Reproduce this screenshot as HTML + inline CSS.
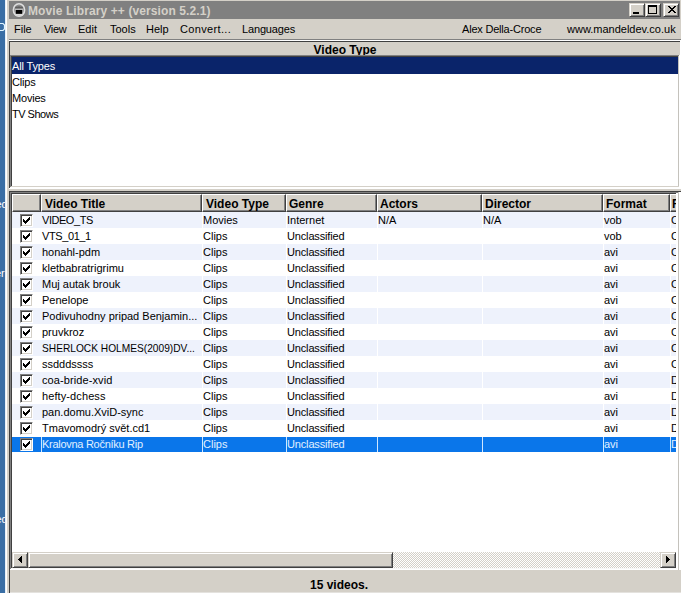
<!DOCTYPE html>
<html><head><meta charset="utf-8"><style>
*{margin:0;padding:0;box-sizing:border-box}
html,body{width:681px;height:593px;overflow:hidden;background:#3a6ea5}
body{position:relative;font-family:"Liberation Sans",sans-serif;font-size:11px;color:#000}
.a{position:absolute}
.t{position:absolute;white-space:nowrap;line-height:16px;height:16px}
.b{font-weight:bold;font-size:12px}
</style></head><body>

<div class="t" style="left:-4.5px;top:196px;color:#fff">ed</div>
<div class="t" style="left:-5px;top:265px;color:#fff">er</div>
<div class="t" style="left:-4.5px;top:511px;color:#fff">ed</div>
<svg class="a" style="left:0;top:0" width="8" height="40"><path d="M0 23.5H3L4.5 25V29L3 30.5H0" fill="none" stroke="#dff4ff" stroke-width="1.2"/></svg>
<div class="a" style="left:5px;top:0px;width:676px;height:593px;background:#d4d0c8;"></div>
<div class="a" style="left:5px;top:0px;width:1px;height:593px;background:#e6eef6;"></div>
<div class="a" style="left:6px;top:0px;width:1px;height:593px;background:#fff;"></div>
<div class="a" style="left:9px;top:1px;width:671px;height:18px;background:#808080;"></div>
<svg class="a" style="left:11px;top:2px" width="16" height="16" viewBox="0 0 16 16">
<ellipse cx="8" cy="8" rx="5.6" ry="6.3" fill="#8a8a8a" stroke="#dedede" stroke-width="1.6"/>
<path d="M4 5.5 Q5 3.8 6.5 4.8 Q8 3.5 9.5 4.8 Q11 3.8 12 5.5 L12 7 L4 7 Z" fill="#5e5e5e"/>
<rect x="4" y="6.6" width="8" height="1.2" fill="#c8c8c8"/>
<rect x="5" y="8" width="6" height="3.8" fill="#000"/>
<rect x="4.2" y="12" width="7.6" height="1.8" fill="#d8d8d8"/>
</svg>
<div class="t b" style="left:28px;top:3px;color:#d4d0c8;letter-spacing:0.1px">Movie Library ++ (version 5.2.1)</div>
<div class="a" style="left:629px;top:3px;width:16px;height:14px;background:#d4d0c8;border-top:1px solid #d4d0c8;border-left:1px solid #d4d0c8;border-right:1px solid #404040;border-bottom:1px solid #404040;box-shadow:inset 1px 1px 0 #fff, inset -1px -1px 0 #808080"><div class="a" style="left:3px;top:8px;width:6px;height:2px;background:#000"></div></div>
<div class="a" style="left:645px;top:3px;width:16px;height:14px;background:#d4d0c8;border-top:1px solid #d4d0c8;border-left:1px solid #d4d0c8;border-right:1px solid #404040;border-bottom:1px solid #404040;box-shadow:inset 1px 1px 0 #fff, inset -1px -1px 0 #808080"><div class="a" style="left:2px;top:1px;width:9px;height:9px;border:1px solid #000;border-top-width:2px"></div></div>
<div class="a" style="left:663px;top:3px;width:16px;height:14px;background:#d4d0c8;border-top:1px solid #d4d0c8;border-left:1px solid #d4d0c8;border-right:1px solid #404040;border-bottom:1px solid #404040;box-shadow:inset 1px 1px 0 #fff, inset -1px -1px 0 #808080"><svg class="a" style="left:4px;top:2px" width="8" height="7" viewBox="0 0 8 7" shape-rendering="crispEdges"><g fill="#000"><rect x="0" y="0" width="2" height="1"/><rect x="6" y="0" width="2" height="1"/><rect x="1" y="1" width="2" height="1"/><rect x="5" y="1" width="2" height="1"/><rect x="2" y="2" width="2" height="1"/><rect x="4" y="2" width="2" height="1"/><rect x="3" y="3" width="2" height="1"/><rect x="2" y="4" width="2" height="1"/><rect x="4" y="4" width="2" height="1"/><rect x="1" y="5" width="2" height="1"/><rect x="5" y="5" width="2" height="1"/><rect x="0" y="6" width="2" height="1"/><rect x="6" y="6" width="2" height="1"/></g></svg></div>
<div class="t" style="left:14px;top:21px;letter-spacing:0px">File</div>
<div class="t" style="left:44px;top:21px;letter-spacing:-0.3px">View</div>
<div class="t" style="left:78px;top:21px;letter-spacing:0px">Edit</div>
<div class="t" style="left:110px;top:21px;letter-spacing:0px">Tools</div>
<div class="t" style="left:146px;top:21px;letter-spacing:0px">Help</div>
<div class="t" style="left:180px;top:21px;letter-spacing:0.35px">Convert...</div>
<div class="t" style="left:242px;top:21px;letter-spacing:-0.15px">Languages</div>
<div class="t" style="left:462px;top:21px;letter-spacing:-0.2px">Alex Della-Croce</div>
<div class="t" style="left:567px;top:21px;letter-spacing:0px">www.mandeldev.co.uk</div>
<div class="a" style="left:9px;top:39px;width:672px;height:1px;background:#808080;"></div>
<div class="a" style="left:9px;top:40px;width:672px;height:1px;background:#fff;"></div>
<div class="a" style="left:9px;top:41px;width:671px;height:1px;background:#404040;"></div>
<div class="a" style="left:9px;top:41px;width:1px;height:148px;background:#404040;"></div>
<div class="a" style="left:9px;top:188px;width:672px;height:1px;background:#fff;"></div>
<div class="a" style="left:680px;top:41px;width:1px;height:148px;background:#fff;"></div>
<div class="a" style="left:10px;top:42px;width:670px;height:13px;background:#d4d0c8;"></div>
<div class="t b" style="left:10px;top:42px;width:670px;text-align:center">Video Type</div>
<div class="a" style="left:10px;top:55px;width:670px;height:1px;background:#808080;"></div>
<div class="a" style="left:10px;top:55px;width:1px;height:133px;background:#808080;"></div>
<div class="a" style="left:11px;top:56px;width:668px;height:1px;background:#404040;"></div>
<div class="a" style="left:11px;top:56px;width:1px;height:131px;background:#404040;"></div>
<div class="a" style="left:12px;top:57px;width:666px;height:129px;background:#fff;"></div>
<div class="a" style="left:678px;top:56px;width:1px;height:131px;background:#c4c2bc;"></div>
<div class="a" style="left:11px;top:186px;width:668px;height:1px;background:#d4d0c8;"></div>
<div class="a" style="left:679px;top:55px;width:1px;height:133px;background:#fff;"></div>
<div class="a" style="left:10px;top:187px;width:670px;height:1px;background:#fff;"></div>
<div class="a" style="left:12px;top:57px;width:666px;height:17px;background:#0a246a;"></div>
<div class="t" style="left:12px;top:58px;color:#fff;letter-spacing:-0.15px">All Types</div>
<div class="t" style="left:12px;top:74px;color:#000;letter-spacing:-0.2px">Clips</div>
<div class="t" style="left:12px;top:90px;color:#000;letter-spacing:-0.2px">Movies</div>
<div class="t" style="left:12px;top:106px;color:#000;letter-spacing:-0.5px">TV Shows</div>
<div class="a" style="left:9px;top:191px;width:672px;height:1px;background:#404040;"></div>
<div class="a" style="left:9px;top:191px;width:1px;height:402px;background:#404040;"></div>
<div class="a" style="left:10px;top:192px;width:668px;height:1px;background:#808080;"></div>
<div class="a" style="left:10px;top:192px;width:1px;height:378px;background:#808080;"></div>
<div class="a" style="left:11px;top:193px;width:666px;height:1px;background:#404040;"></div>
<div class="a" style="left:11px;top:193px;width:1px;height:376px;background:#404040;"></div>
<div class="a" style="left:12px;top:194px;width:664px;height:374px;background:#fff;"></div>
<div class="a" style="left:676px;top:193px;width:2px;height:376px;background:#fff;"></div>
<div class="a" style="left:678px;top:192px;width:1px;height:378px;background:#c4c2bc;"></div>
<div class="a" style="left:679px;top:192px;width:2px;height:378px;background:#fff;"></div>
<div class="a" style="left:11px;top:568px;width:666px;height:1px;background:#f8f8f8;"></div>
<div class="a" style="left:10px;top:569px;width:668px;height:1px;background:#fff;"></div>
<div class="a" style="left:680px;top:570px;width:1px;height:23px;background:#f4f4f4;"></div>
<div class="a" style="left:12px;top:194px;width:664px;height:18px;overflow:hidden">
<div class="a" style="left:0px;top:0;width:29px;height:18px;background:#d4d0c8;border-top:1px solid #fff;border-left:1px solid #fff;border-right:1px solid #404040;border-bottom:1px solid #404040;box-shadow:inset -1px -1px 0 #808080"></div>
<div class="a" style="left:29px;top:0;width:161px;height:18px;background:#d4d0c8;border-top:1px solid #fff;border-left:1px solid #fff;border-right:1px solid #404040;border-bottom:1px solid #404040;box-shadow:inset -1px -1px 0 #808080"></div>
<div class="a" style="left:190px;top:0;width:84px;height:18px;background:#d4d0c8;border-top:1px solid #fff;border-left:1px solid #fff;border-right:1px solid #404040;border-bottom:1px solid #404040;box-shadow:inset -1px -1px 0 #808080"></div>
<div class="a" style="left:274px;top:0;width:91px;height:18px;background:#d4d0c8;border-top:1px solid #fff;border-left:1px solid #fff;border-right:1px solid #404040;border-bottom:1px solid #404040;box-shadow:inset -1px -1px 0 #808080"></div>
<div class="a" style="left:365px;top:0;width:105px;height:18px;background:#d4d0c8;border-top:1px solid #fff;border-left:1px solid #fff;border-right:1px solid #404040;border-bottom:1px solid #404040;box-shadow:inset -1px -1px 0 #808080"></div>
<div class="a" style="left:470px;top:0;width:121px;height:18px;background:#d4d0c8;border-top:1px solid #fff;border-left:1px solid #fff;border-right:1px solid #404040;border-bottom:1px solid #404040;box-shadow:inset -1px -1px 0 #808080"></div>
<div class="a" style="left:591px;top:0;width:67px;height:18px;background:#d4d0c8;border-top:1px solid #fff;border-left:1px solid #fff;border-right:1px solid #404040;border-bottom:1px solid #404040;box-shadow:inset -1px -1px 0 #808080"></div>
<div class="a" style="left:658px;top:0;width:13px;height:18px;background:#d4d0c8;border-top:1px solid #fff;border-left:1px solid #fff;border-right:1px solid #404040;border-bottom:1px solid #404040;box-shadow:inset -1px -1px 0 #808080"></div>
<div class="t b" style="left:33px;top:2px">Video Title</div>
<div class="t b" style="left:194px;top:2px">Video Type</div>
<div class="t b" style="left:277px;top:2px">Genre</div>
<div class="t b" style="left:368px;top:2px">Actors</div>
<div class="t b" style="left:473px;top:2px">Director</div>
<div class="t b" style="left:594px;top:2px">Format</div>
<div class="t b" style="left:660px;top:2px">F</div>
</div>
<div class="a" style="left:12px;top:212px;width:664px;height:240px;overflow:hidden">
<div class="a" style="left:0;top:0px;width:664px;height:16px;background:#eef2fc"></div>
<div class="a" style="left:190px;top:0px;width:1px;height:16px;background:#fff"></div>
<div class="a" style="left:274px;top:0px;width:1px;height:16px;background:#fff"></div>
<div class="a" style="left:365px;top:0px;width:1px;height:16px;background:#fff"></div>
<div class="a" style="left:470px;top:0px;width:1px;height:16px;background:#fff"></div>
<div class="a" style="left:591px;top:0px;width:1px;height:16px;background:#fff"></div>
<div class="a" style="left:658px;top:0px;width:1px;height:16px;background:#fff"></div>
<div class="t" style="left:30px;top:0px;color:#000;letter-spacing:-0.45px;">VIDEO_TS</div>
<div class="t" style="left:191px;top:0px;color:#000;">Movies</div>
<div class="t" style="left:275px;top:0px;color:#000;">Internet</div>
<div class="t" style="left:366px;top:0px;color:#000;">N/A</div>
<div class="t" style="left:471px;top:0px;color:#000;">N/A</div>
<div class="t" style="left:592px;top:0px;color:#000;">vob</div>
<div class="t" style="left:659px;top:0px;color:#000;">C</div>
<div class="t" style="left:30px;top:16px;color:#000;letter-spacing:-0.4px;">VTS_01_1</div>
<div class="t" style="left:191px;top:16px;color:#000;">Clips</div>
<div class="t" style="left:275px;top:16px;color:#000;letter-spacing:-0.15px;">Unclassified</div>
<div class="t" style="left:592px;top:16px;color:#000;">vob</div>
<div class="t" style="left:659px;top:16px;color:#000;">C</div>
<div class="a" style="left:0;top:32px;width:664px;height:16px;background:#eef2fc"></div>
<div class="a" style="left:190px;top:32px;width:1px;height:16px;background:#fff"></div>
<div class="a" style="left:274px;top:32px;width:1px;height:16px;background:#fff"></div>
<div class="a" style="left:365px;top:32px;width:1px;height:16px;background:#fff"></div>
<div class="a" style="left:470px;top:32px;width:1px;height:16px;background:#fff"></div>
<div class="a" style="left:591px;top:32px;width:1px;height:16px;background:#fff"></div>
<div class="a" style="left:658px;top:32px;width:1px;height:16px;background:#fff"></div>
<div class="t" style="left:30px;top:32px;color:#000;">honahl-pdm</div>
<div class="t" style="left:191px;top:32px;color:#000;">Clips</div>
<div class="t" style="left:275px;top:32px;color:#000;letter-spacing:-0.15px;">Unclassified</div>
<div class="t" style="left:592px;top:32px;color:#000;">avi</div>
<div class="t" style="left:659px;top:32px;color:#000;">C</div>
<div class="t" style="left:30px;top:48px;color:#000;">kletbabratrigrimu</div>
<div class="t" style="left:191px;top:48px;color:#000;">Clips</div>
<div class="t" style="left:275px;top:48px;color:#000;letter-spacing:-0.15px;">Unclassified</div>
<div class="t" style="left:592px;top:48px;color:#000;">avi</div>
<div class="t" style="left:659px;top:48px;color:#000;">C</div>
<div class="a" style="left:0;top:64px;width:664px;height:16px;background:#eef2fc"></div>
<div class="a" style="left:190px;top:64px;width:1px;height:16px;background:#fff"></div>
<div class="a" style="left:274px;top:64px;width:1px;height:16px;background:#fff"></div>
<div class="a" style="left:365px;top:64px;width:1px;height:16px;background:#fff"></div>
<div class="a" style="left:470px;top:64px;width:1px;height:16px;background:#fff"></div>
<div class="a" style="left:591px;top:64px;width:1px;height:16px;background:#fff"></div>
<div class="a" style="left:658px;top:64px;width:1px;height:16px;background:#fff"></div>
<div class="t" style="left:30px;top:64px;color:#000;">Muj autak brouk</div>
<div class="t" style="left:191px;top:64px;color:#000;">Clips</div>
<div class="t" style="left:275px;top:64px;color:#000;letter-spacing:-0.15px;">Unclassified</div>
<div class="t" style="left:592px;top:64px;color:#000;">avi</div>
<div class="t" style="left:659px;top:64px;color:#000;">C</div>
<div class="t" style="left:30px;top:80px;color:#000;">Penelope</div>
<div class="t" style="left:191px;top:80px;color:#000;">Clips</div>
<div class="t" style="left:275px;top:80px;color:#000;letter-spacing:-0.15px;">Unclassified</div>
<div class="t" style="left:592px;top:80px;color:#000;">avi</div>
<div class="t" style="left:659px;top:80px;color:#000;">C</div>
<div class="a" style="left:0;top:96px;width:664px;height:16px;background:#eef2fc"></div>
<div class="a" style="left:190px;top:96px;width:1px;height:16px;background:#fff"></div>
<div class="a" style="left:274px;top:96px;width:1px;height:16px;background:#fff"></div>
<div class="a" style="left:365px;top:96px;width:1px;height:16px;background:#fff"></div>
<div class="a" style="left:470px;top:96px;width:1px;height:16px;background:#fff"></div>
<div class="a" style="left:591px;top:96px;width:1px;height:16px;background:#fff"></div>
<div class="a" style="left:658px;top:96px;width:1px;height:16px;background:#fff"></div>
<div class="t" style="left:30px;top:96px;color:#000;">Podivuhodny pripad Benjamin...</div>
<div class="t" style="left:191px;top:96px;color:#000;">Clips</div>
<div class="t" style="left:275px;top:96px;color:#000;letter-spacing:-0.15px;">Unclassified</div>
<div class="t" style="left:592px;top:96px;color:#000;">avi</div>
<div class="t" style="left:659px;top:96px;color:#000;">C</div>
<div class="t" style="left:30px;top:112px;color:#000;">pruvkroz</div>
<div class="t" style="left:191px;top:112px;color:#000;">Clips</div>
<div class="t" style="left:275px;top:112px;color:#000;letter-spacing:-0.15px;">Unclassified</div>
<div class="t" style="left:592px;top:112px;color:#000;">avi</div>
<div class="t" style="left:659px;top:112px;color:#000;">C</div>
<div class="a" style="left:0;top:128px;width:664px;height:16px;background:#eef2fc"></div>
<div class="a" style="left:190px;top:128px;width:1px;height:16px;background:#fff"></div>
<div class="a" style="left:274px;top:128px;width:1px;height:16px;background:#fff"></div>
<div class="a" style="left:365px;top:128px;width:1px;height:16px;background:#fff"></div>
<div class="a" style="left:470px;top:128px;width:1px;height:16px;background:#fff"></div>
<div class="a" style="left:591px;top:128px;width:1px;height:16px;background:#fff"></div>
<div class="a" style="left:658px;top:128px;width:1px;height:16px;background:#fff"></div>
<div class="t" style="left:30px;top:128px;color:#000;transform:scaleX(0.925);transform-origin:0 0;">SHERLOCK HOLMES(2009)DV...</div>
<div class="t" style="left:191px;top:128px;color:#000;">Clips</div>
<div class="t" style="left:275px;top:128px;color:#000;letter-spacing:-0.15px;">Unclassified</div>
<div class="t" style="left:592px;top:128px;color:#000;">avi</div>
<div class="t" style="left:659px;top:128px;color:#000;">C</div>
<div class="t" style="left:30px;top:144px;color:#000;">ssdddssss</div>
<div class="t" style="left:191px;top:144px;color:#000;">Clips</div>
<div class="t" style="left:275px;top:144px;color:#000;letter-spacing:-0.15px;">Unclassified</div>
<div class="t" style="left:592px;top:144px;color:#000;">avi</div>
<div class="t" style="left:659px;top:144px;color:#000;">C</div>
<div class="a" style="left:0;top:160px;width:664px;height:16px;background:#eef2fc"></div>
<div class="a" style="left:190px;top:160px;width:1px;height:16px;background:#fff"></div>
<div class="a" style="left:274px;top:160px;width:1px;height:16px;background:#fff"></div>
<div class="a" style="left:365px;top:160px;width:1px;height:16px;background:#fff"></div>
<div class="a" style="left:470px;top:160px;width:1px;height:16px;background:#fff"></div>
<div class="a" style="left:591px;top:160px;width:1px;height:16px;background:#fff"></div>
<div class="a" style="left:658px;top:160px;width:1px;height:16px;background:#fff"></div>
<div class="t" style="left:30px;top:160px;color:#000;letter-spacing:0.1px;">coa-bride-xvid</div>
<div class="t" style="left:191px;top:160px;color:#000;">Clips</div>
<div class="t" style="left:275px;top:160px;color:#000;letter-spacing:-0.15px;">Unclassified</div>
<div class="t" style="left:592px;top:160px;color:#000;">avi</div>
<div class="t" style="left:659px;top:160px;color:#000;">D</div>
<div class="t" style="left:30px;top:176px;color:#000;letter-spacing:0.1px;">hefty-dchess</div>
<div class="t" style="left:191px;top:176px;color:#000;">Clips</div>
<div class="t" style="left:275px;top:176px;color:#000;letter-spacing:-0.15px;">Unclassified</div>
<div class="t" style="left:592px;top:176px;color:#000;">avi</div>
<div class="t" style="left:659px;top:176px;color:#000;">D</div>
<div class="a" style="left:0;top:192px;width:664px;height:16px;background:#eef2fc"></div>
<div class="a" style="left:190px;top:192px;width:1px;height:16px;background:#fff"></div>
<div class="a" style="left:274px;top:192px;width:1px;height:16px;background:#fff"></div>
<div class="a" style="left:365px;top:192px;width:1px;height:16px;background:#fff"></div>
<div class="a" style="left:470px;top:192px;width:1px;height:16px;background:#fff"></div>
<div class="a" style="left:591px;top:192px;width:1px;height:16px;background:#fff"></div>
<div class="a" style="left:658px;top:192px;width:1px;height:16px;background:#fff"></div>
<div class="t" style="left:30px;top:192px;color:#000;">pan.domu.XviD-sync</div>
<div class="t" style="left:191px;top:192px;color:#000;">Clips</div>
<div class="t" style="left:275px;top:192px;color:#000;letter-spacing:-0.15px;">Unclassified</div>
<div class="t" style="left:592px;top:192px;color:#000;">avi</div>
<div class="t" style="left:659px;top:192px;color:#000;">D</div>
<div class="t" style="left:30px;top:208px;color:#000;">Tmavomodrý svět.cd1</div>
<div class="t" style="left:191px;top:208px;color:#000;">Clips</div>
<div class="t" style="left:275px;top:208px;color:#000;letter-spacing:-0.15px;">Unclassified</div>
<div class="t" style="left:592px;top:208px;color:#000;">avi</div>
<div class="t" style="left:659px;top:208px;color:#000;">D</div>
<div class="a" style="left:0;top:225px;width:664px;height:15px;background:#0a76ea"></div>
<div class="a" style="left:29px;top:225px;width:1px;height:15px;background:#cfe6ff"></div>
<div class="a" style="left:190px;top:225px;width:1px;height:15px;background:#cfe6ff"></div>
<div class="a" style="left:274px;top:225px;width:1px;height:15px;background:#cfe6ff"></div>
<div class="a" style="left:365px;top:225px;width:1px;height:15px;background:#cfe6ff"></div>
<div class="a" style="left:470px;top:225px;width:1px;height:15px;background:#cfe6ff"></div>
<div class="a" style="left:591px;top:225px;width:1px;height:15px;background:#cfe6ff"></div>
<div class="a" style="left:658px;top:225px;width:1px;height:15px;background:#cfe6ff"></div>
<div class="t" style="left:30px;top:224px;color:#e0f0ff;letter-spacing:-0.28px;">Kralovna Ročníku Rip</div>
<div class="t" style="left:191px;top:224px;color:#e0f0ff;">Clips</div>
<div class="t" style="left:275px;top:224px;color:#e0f0ff;letter-spacing:-0.15px;">Unclassified</div>
<div class="t" style="left:592px;top:224px;color:#e0f0ff;">avi</div>
<div class="t" style="left:659px;top:224px;color:#e0f0ff;">D</div>
</div>
<div class="a" style="left:20px;top:214px;width:13px;height:13px;background:#fff;border-top:1px solid #808080;border-left:1px solid #808080;border-right:1px solid #fff;border-bottom:1px solid #fff;box-shadow:inset 1px 1px 0 #404040, inset -1px -1px 0 #d4d0c8"><svg class="a" style="left:2px;top:2px" width="7" height="7" viewBox="0 0 7 7" shape-rendering="crispEdges"><path d="M6 0h1v3h-1v1h-1v1h-1v1h-1v1h-1v-1h-1v-1h-1v-3h1v1h1v1h1v-1h1v-1h1z" fill="#000"/></svg></div>
<div class="a" style="left:20px;top:230px;width:13px;height:13px;background:#fff;border-top:1px solid #808080;border-left:1px solid #808080;border-right:1px solid #fff;border-bottom:1px solid #fff;box-shadow:inset 1px 1px 0 #404040, inset -1px -1px 0 #d4d0c8"><svg class="a" style="left:2px;top:2px" width="7" height="7" viewBox="0 0 7 7" shape-rendering="crispEdges"><path d="M6 0h1v3h-1v1h-1v1h-1v1h-1v1h-1v-1h-1v-1h-1v-3h1v1h1v1h1v-1h1v-1h1z" fill="#000"/></svg></div>
<div class="a" style="left:20px;top:246px;width:13px;height:13px;background:#fff;border-top:1px solid #808080;border-left:1px solid #808080;border-right:1px solid #fff;border-bottom:1px solid #fff;box-shadow:inset 1px 1px 0 #404040, inset -1px -1px 0 #d4d0c8"><svg class="a" style="left:2px;top:2px" width="7" height="7" viewBox="0 0 7 7" shape-rendering="crispEdges"><path d="M6 0h1v3h-1v1h-1v1h-1v1h-1v1h-1v-1h-1v-1h-1v-3h1v1h1v1h1v-1h1v-1h1z" fill="#000"/></svg></div>
<div class="a" style="left:20px;top:262px;width:13px;height:13px;background:#fff;border-top:1px solid #808080;border-left:1px solid #808080;border-right:1px solid #fff;border-bottom:1px solid #fff;box-shadow:inset 1px 1px 0 #404040, inset -1px -1px 0 #d4d0c8"><svg class="a" style="left:2px;top:2px" width="7" height="7" viewBox="0 0 7 7" shape-rendering="crispEdges"><path d="M6 0h1v3h-1v1h-1v1h-1v1h-1v1h-1v-1h-1v-1h-1v-3h1v1h1v1h1v-1h1v-1h1z" fill="#000"/></svg></div>
<div class="a" style="left:20px;top:278px;width:13px;height:13px;background:#fff;border-top:1px solid #808080;border-left:1px solid #808080;border-right:1px solid #fff;border-bottom:1px solid #fff;box-shadow:inset 1px 1px 0 #404040, inset -1px -1px 0 #d4d0c8"><svg class="a" style="left:2px;top:2px" width="7" height="7" viewBox="0 0 7 7" shape-rendering="crispEdges"><path d="M6 0h1v3h-1v1h-1v1h-1v1h-1v1h-1v-1h-1v-1h-1v-3h1v1h1v1h1v-1h1v-1h1z" fill="#000"/></svg></div>
<div class="a" style="left:20px;top:294px;width:13px;height:13px;background:#fff;border-top:1px solid #808080;border-left:1px solid #808080;border-right:1px solid #fff;border-bottom:1px solid #fff;box-shadow:inset 1px 1px 0 #404040, inset -1px -1px 0 #d4d0c8"><svg class="a" style="left:2px;top:2px" width="7" height="7" viewBox="0 0 7 7" shape-rendering="crispEdges"><path d="M6 0h1v3h-1v1h-1v1h-1v1h-1v1h-1v-1h-1v-1h-1v-3h1v1h1v1h1v-1h1v-1h1z" fill="#000"/></svg></div>
<div class="a" style="left:20px;top:310px;width:13px;height:13px;background:#fff;border-top:1px solid #808080;border-left:1px solid #808080;border-right:1px solid #fff;border-bottom:1px solid #fff;box-shadow:inset 1px 1px 0 #404040, inset -1px -1px 0 #d4d0c8"><svg class="a" style="left:2px;top:2px" width="7" height="7" viewBox="0 0 7 7" shape-rendering="crispEdges"><path d="M6 0h1v3h-1v1h-1v1h-1v1h-1v1h-1v-1h-1v-1h-1v-3h1v1h1v1h1v-1h1v-1h1z" fill="#000"/></svg></div>
<div class="a" style="left:20px;top:326px;width:13px;height:13px;background:#fff;border-top:1px solid #808080;border-left:1px solid #808080;border-right:1px solid #fff;border-bottom:1px solid #fff;box-shadow:inset 1px 1px 0 #404040, inset -1px -1px 0 #d4d0c8"><svg class="a" style="left:2px;top:2px" width="7" height="7" viewBox="0 0 7 7" shape-rendering="crispEdges"><path d="M6 0h1v3h-1v1h-1v1h-1v1h-1v1h-1v-1h-1v-1h-1v-3h1v1h1v1h1v-1h1v-1h1z" fill="#000"/></svg></div>
<div class="a" style="left:20px;top:342px;width:13px;height:13px;background:#fff;border-top:1px solid #808080;border-left:1px solid #808080;border-right:1px solid #fff;border-bottom:1px solid #fff;box-shadow:inset 1px 1px 0 #404040, inset -1px -1px 0 #d4d0c8"><svg class="a" style="left:2px;top:2px" width="7" height="7" viewBox="0 0 7 7" shape-rendering="crispEdges"><path d="M6 0h1v3h-1v1h-1v1h-1v1h-1v1h-1v-1h-1v-1h-1v-3h1v1h1v1h1v-1h1v-1h1z" fill="#000"/></svg></div>
<div class="a" style="left:20px;top:358px;width:13px;height:13px;background:#fff;border-top:1px solid #808080;border-left:1px solid #808080;border-right:1px solid #fff;border-bottom:1px solid #fff;box-shadow:inset 1px 1px 0 #404040, inset -1px -1px 0 #d4d0c8"><svg class="a" style="left:2px;top:2px" width="7" height="7" viewBox="0 0 7 7" shape-rendering="crispEdges"><path d="M6 0h1v3h-1v1h-1v1h-1v1h-1v1h-1v-1h-1v-1h-1v-3h1v1h1v1h1v-1h1v-1h1z" fill="#000"/></svg></div>
<div class="a" style="left:20px;top:374px;width:13px;height:13px;background:#fff;border-top:1px solid #808080;border-left:1px solid #808080;border-right:1px solid #fff;border-bottom:1px solid #fff;box-shadow:inset 1px 1px 0 #404040, inset -1px -1px 0 #d4d0c8"><svg class="a" style="left:2px;top:2px" width="7" height="7" viewBox="0 0 7 7" shape-rendering="crispEdges"><path d="M6 0h1v3h-1v1h-1v1h-1v1h-1v1h-1v-1h-1v-1h-1v-3h1v1h1v1h1v-1h1v-1h1z" fill="#000"/></svg></div>
<div class="a" style="left:20px;top:390px;width:13px;height:13px;background:#fff;border-top:1px solid #808080;border-left:1px solid #808080;border-right:1px solid #fff;border-bottom:1px solid #fff;box-shadow:inset 1px 1px 0 #404040, inset -1px -1px 0 #d4d0c8"><svg class="a" style="left:2px;top:2px" width="7" height="7" viewBox="0 0 7 7" shape-rendering="crispEdges"><path d="M6 0h1v3h-1v1h-1v1h-1v1h-1v1h-1v-1h-1v-1h-1v-3h1v1h1v1h1v-1h1v-1h1z" fill="#000"/></svg></div>
<div class="a" style="left:20px;top:406px;width:13px;height:13px;background:#fff;border-top:1px solid #808080;border-left:1px solid #808080;border-right:1px solid #fff;border-bottom:1px solid #fff;box-shadow:inset 1px 1px 0 #404040, inset -1px -1px 0 #d4d0c8"><svg class="a" style="left:2px;top:2px" width="7" height="7" viewBox="0 0 7 7" shape-rendering="crispEdges"><path d="M6 0h1v3h-1v1h-1v1h-1v1h-1v1h-1v-1h-1v-1h-1v-3h1v1h1v1h1v-1h1v-1h1z" fill="#000"/></svg></div>
<div class="a" style="left:20px;top:422px;width:13px;height:13px;background:#fff;border-top:1px solid #808080;border-left:1px solid #808080;border-right:1px solid #fff;border-bottom:1px solid #fff;box-shadow:inset 1px 1px 0 #404040, inset -1px -1px 0 #d4d0c8"><svg class="a" style="left:2px;top:2px" width="7" height="7" viewBox="0 0 7 7" shape-rendering="crispEdges"><path d="M6 0h1v3h-1v1h-1v1h-1v1h-1v1h-1v-1h-1v-1h-1v-3h1v1h1v1h1v-1h1v-1h1z" fill="#000"/></svg></div>
<div class="a" style="left:20px;top:438px;width:13px;height:13px;background:#fff;border-top:1px solid #808080;border-left:1px solid #808080;border-right:1px solid #fff;border-bottom:1px solid #fff;box-shadow:inset 1px 1px 0 #404040, inset -1px -1px 0 #d4d0c8"><svg class="a" style="left:2px;top:2px" width="7" height="7" viewBox="0 0 7 7" shape-rendering="crispEdges"><path d="M6 0h1v3h-1v1h-1v1h-1v1h-1v1h-1v-1h-1v-1h-1v-3h1v1h1v1h1v-1h1v-1h1z" fill="#000"/></svg></div>
<div class="a" style="left:12px;top:552px;width:664px;height:16px;background-color:#fff;background-image:linear-gradient(45deg,#d4d0c8 25%,transparent 25%,transparent 75%,#d4d0c8 75%),linear-gradient(45deg,#d4d0c8 25%,transparent 25%,transparent 75%,#d4d0c8 75%);background-size:2px 2px;background-position:0 0,1px 1px"></div>
<div class="a" style="left:12px;top:552px;width:16px;height:16px;background:#d4d0c8;border-top:1px solid #d4d0c8;border-left:1px solid #d4d0c8;border-right:1px solid #404040;border-bottom:1px solid #404040;box-shadow:inset 1px 1px 0 #fff, inset -1px -1px 0 #808080"><svg class="a" style="left:5px;top:3px" width="4" height="7" viewBox="0 0 4 7" shape-rendering="crispEdges"><path d="M3 0h1v7h-1v-1h-1v-1h-1v-1h-1v-1h1v-1h1v-1h1z" fill="#000"/></svg></div>
<div class="a" style="left:28px;top:552px;width:365px;height:16px;background:#d4d0c8;border-top:1px solid #d4d0c8;border-left:1px solid #d4d0c8;border-right:1px solid #404040;border-bottom:1px solid #404040;box-shadow:inset 1px 1px 0 #fff, inset -1px -1px 0 #808080"></div>
<div class="a" style="left:660px;top:552px;width:16px;height:16px;background:#d4d0c8;border-top:1px solid #d4d0c8;border-left:1px solid #d4d0c8;border-right:1px solid #404040;border-bottom:1px solid #404040;box-shadow:inset 1px 1px 0 #fff, inset -1px -1px 0 #808080"><svg class="a" style="left:5px;top:3px" width="4" height="7" viewBox="0 0 4 7" shape-rendering="crispEdges"><path d="M0 0h1v1h1v1h1v1h1v1h-1v1h-1v1h-1v1h-1z" fill="#000"/></svg></div>
<div class="a" style="left:10px;top:570px;width:671px;height:23px;background:#d4d0c8;"></div>
<div class="a" style="left:10px;top:592px;width:671px;height:1px;background:#e4e2de;"></div>
<div class="t b" style="left:310px;top:577px">15 videos.</div>
</body></html>
